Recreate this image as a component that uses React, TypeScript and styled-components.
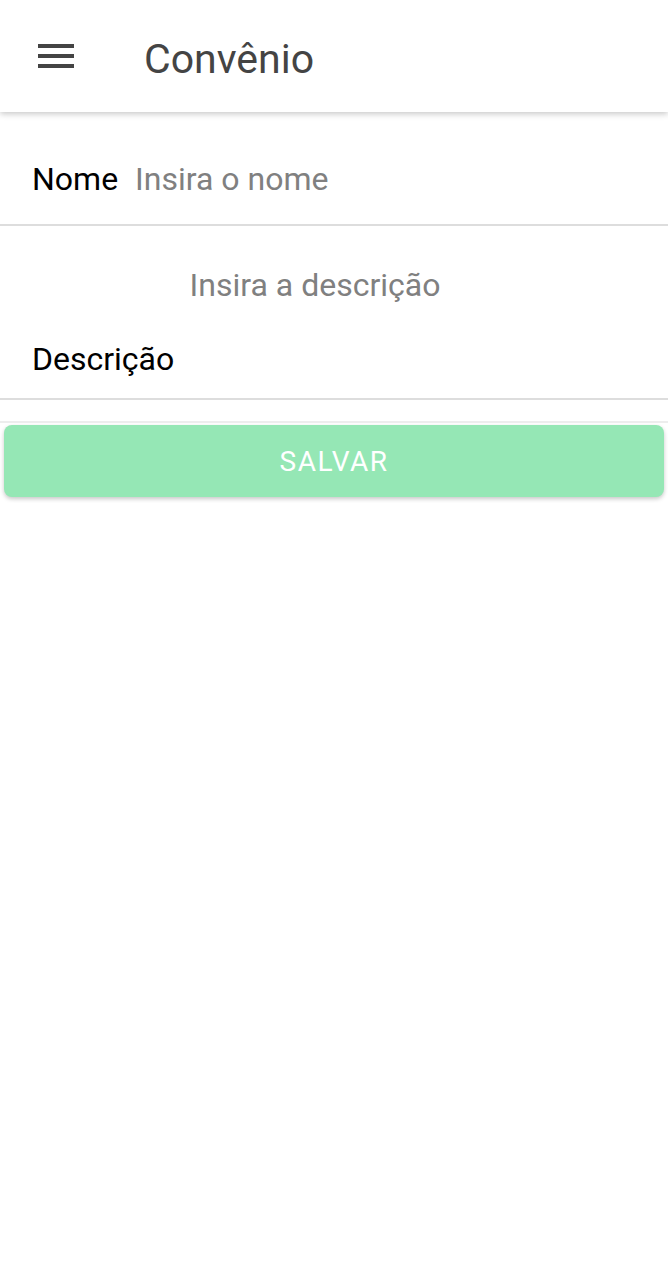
import React from "react";
import styled, { createGlobalStyle } from "styled-components";

const Global = createGlobalStyle`
  html, body { margin: 0; padding: 0; background: #ffffff; }
  body { font-family: Roboto, "Noto Sans", Arial, sans-serif; }
  * { box-sizing: border-box; }
`;

const Page = styled.div`
  width: 668px;
  min-height: 1272px;
  background: #ffffff;
  display: flex;
  flex-direction: column;
`;

const Header = styled.header`
  position: relative;
  z-index: 2;
  height: 112px;
  display: flex;
  align-items: center;
  padding: 0 0 0 32px;
  background: #ffffff;
  box-shadow: 0 2px 6px rgba(0, 0, 0, 0.22);
`;

const MenuButton = styled.button`
  width: 48px;
  height: 48px;
  padding: 0;
  border: 0;
  background: transparent;
  display: flex;
  align-items: center;
  justify-content: center;
  color: #444444;
`;

const Title = styled.h1`
  margin: 6px 0 0 64px;
  font-family: Roboto, sans-serif;
  font-weight: 400;
  font-size: 41px;
  line-height: 40px;
  color: #444444;
`;

const Form = styled.main`
  display: flex;
  flex-direction: column;
`;

const NameRow = styled.label`
  display: flex;
  align-items: center;
  padding: 47px 0 25px 32px;
  border-bottom: 2px solid #dddddd;
`;

const Label = styled.span`
  font-family: Roboto, sans-serif;
  font-size: 32px;
  line-height: 40px;
  color: #000000;
  flex: none;
`;

const NameInput = styled.input`
  flex: 1;
  min-width: 0;
  margin-left: 17px;
  height: 40px;
  padding: 0;
  border: 0;
  outline: none;
  background: transparent;
  font-family: Roboto, sans-serif;
  font-size: 32px;
  color: #000000;
  &::placeholder { color: #808080; }
`;

const DescBlock = styled.label`
  display: flex;
  flex-direction: column;
  padding: 39px 0 19px 32px;
  border-bottom: 2px solid #dddddd;
  gap: 34px;
`;

const DescInput = styled.input`
  height: 40px;
  margin-right: 70px;
  padding: 0;
  border: 0;
  outline: none;
  background: transparent;
  text-align: center;
  font-family: Roboto, sans-serif;
  font-size: 32px;
  color: #000000;
  &::placeholder { color: #808080; }
`;

const ButtonArea = styled.div`
  margin-top: 21px;
  border-top: 2px solid #ededed;
  padding: 2px 4px 0;
`;

const SaveButton = styled.button`
  width: 100%;
  height: 72px;
  border: 0;
  border-radius: 8px;
  background: #95e7b5;
  color: #ffffff;
  font-family: Roboto, sans-serif;
  font-size: 28px;
  letter-spacing: 1.5px;
  font-weight: 400;
  box-shadow: 0 2px 4px rgba(0, 0, 0, 0.22);
  display: flex;
  align-items: center;
  justify-content: center;
`;

const MenuIcon = () => (
  <svg width="48" height="48" viewBox="0 0 24 24" fill="currentColor" aria-hidden>
    <path d="M3 18h18v-2H3v2zm0-5h18v-2H3v2zm0-7v2h18V6H3z" />
  </svg>
);

export default function App() {
  return (
    <Page>
      <Global />
      <Header>
        <MenuButton aria-label="menu">
          <MenuIcon />
        </MenuButton>
        <Title>Convênio</Title>
      </Header>
      <Form>
        <NameRow>
          <Label>Nome</Label>
          <NameInput placeholder="Insira o nome" />
        </NameRow>
        <DescBlock>
          <DescInput placeholder="Insira a descrição" />
          <Label>Descrição</Label>
        </DescBlock>
        <ButtonArea>
          <SaveButton>SALVAR</SaveButton>
        </ButtonArea>
      </Form>
    </Page>
  );
}
